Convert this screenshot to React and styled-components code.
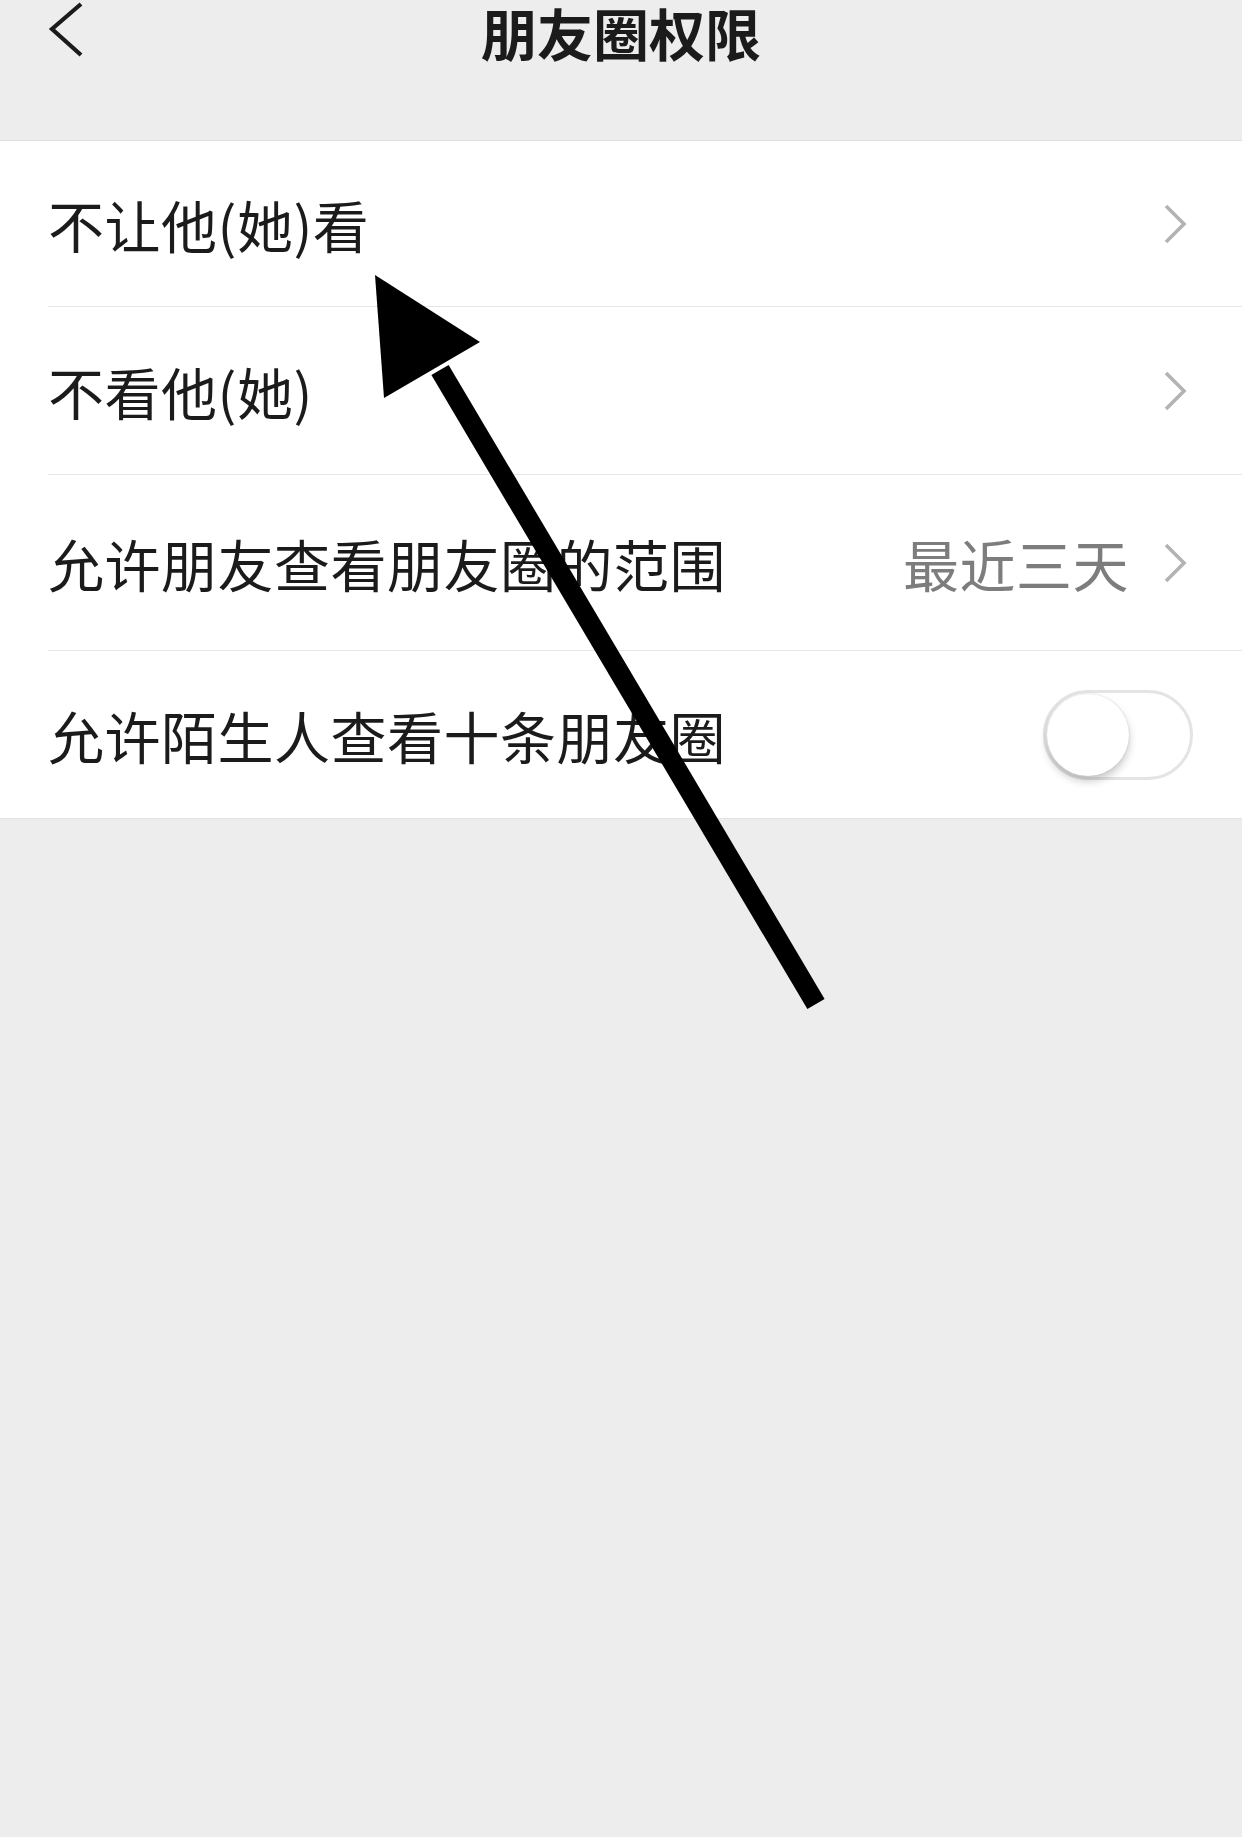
import React from 'react';
import styled, { createGlobalStyle } from 'styled-components';

const GlobalStyle = createGlobalStyle`
  html, body {
    margin: 0;
    padding: 0;
    background: #ededed;
  }
  body {
    font-family: "Noto Sans CJK SC", "Noto Sans", sans-serif;
    color: #1b1b1b;
  }
`;

const Page = styled.div`
  position: relative;
  width: 1242px;
  min-height: 1837px;
  background: #ededed;
  overflow: hidden;
`;

const NavBar = styled.header`
  display: grid;
  grid-template-columns: 1fr auto 1fr;
  align-items: start;
  height: 141px;
  padding: 0 48px;
  box-sizing: border-box;
  border-bottom: 1px solid #dedede;
`;

const BackButton = styled.button`
  justify-self: start;
  display: flex;
  padding: 0;
  margin: 2px 0 0 0;
  border: 0;
  background: none;
  cursor: pointer;
`;

const Title = styled.h1`
  margin: 0;
  padding-top: 2px;
  font-size: 56px;
  line-height: 60px;
  font-weight: 700;
  letter-spacing: 0;
  color: #1b1b1b;
`;

const List = styled.section`
  background: #fff;
  border-bottom: 1px solid #e2e2e2;
`;

const Row = styled.div`
  display: flex;
  align-items: center;
  height: ${p => p.height}px;
  margin-left: 48px;
  padding-right: 55px;
  box-sizing: border-box;
  border-bottom: ${p => (p.last ? 'none' : '1px solid #e6e6e6')};
`;

const Label = styled.span`
  flex: 1;
  font-size: 56px;
  line-height: 1;
  letter-spacing: 0.5px;
  color: #1b1b1b;
`;

const Value = styled.span`
  font-size: 56px;
  line-height: 1;
  letter-spacing: 0.5px;
  color: #7d7d7d;
  margin-right: 34px;
`;

const Chevron = styled.svg`
  flex: none;
  display: block;
`;

const Track = styled.button`
  position: relative;
  width: 150px;
  height: 90px;
  margin-right: -6px;
  padding: 0;
  border: 3px solid #e4e4e4;
  border-radius: 45px;
  background: #fff;
  box-sizing: border-box;
  cursor: pointer;
`;

const Knob = styled.span`
  position: absolute;
  top: 1px;
  left: 1px;
  width: 82px;
  height: 82px;
  border-radius: 50%;
  background: #fff;
  box-shadow: 0 5px 8px rgba(0, 0, 0, 0.22), 0 0 2px rgba(0, 0, 0, 0.15);
`;

const Overlay = styled.svg`
  position: absolute;
  top: 0;
  left: 0;
  pointer-events: none;
`;

const items = [
  { label: '不让他(她)看', height: 166 },
  { label: '不看他(她)', height: 168 },
  { label: '允许朋友查看朋友圈的范围', value: '最近三天', height: 176 },
  { label: '允许陌生人查看十条朋友圈', toggle: true, height: 167 },
];

function RightChevron() {
  return (
    <Chevron width="24" height="42" viewBox="0 0 24 42">
      <polyline points="3,3 21,21 3,39" fill="none" stroke="#b3b3b3" strokeWidth="3.6" />
    </Chevron>
  );
}

function Switch() {
  return (
    <Track aria-label="switch">
      <Knob />
    </Track>
  );
}

export default function App() {
  return (
    <Page>
      <GlobalStyle />
      <NavBar>
        <BackButton aria-label="back">
          <svg width="40" height="56" viewBox="0 0 40 56">
            <polyline points="33,2 4,27 33,53" fill="none" stroke="#1b1b1b" strokeWidth="4.2" />
          </svg>
        </BackButton>
        <Title>朋友圈权限</Title>
        <span />
      </NavBar>
      <List>
        {items.map((item, i) => (
          <Row key={item.label} height={item.height} last={i === items.length - 1}>
            <Label>{item.label}</Label>
            {item.value && <Value>{item.value}</Value>}
            {item.toggle ? <Switch /> : <RightChevron />}
          </Row>
        ))}
      </List>
      {/* pointer drawn over the list */}
      <Overlay width="1242" height="1837" viewBox="0 0 1242 1837">
        <line x1="440" y1="370" x2="816" y2="1004" stroke="#000" strokeWidth="20" />
        <polygon points="375,275 480,342 384,398" fill="#000" />
      </Overlay>
    </Page>
  );
}
